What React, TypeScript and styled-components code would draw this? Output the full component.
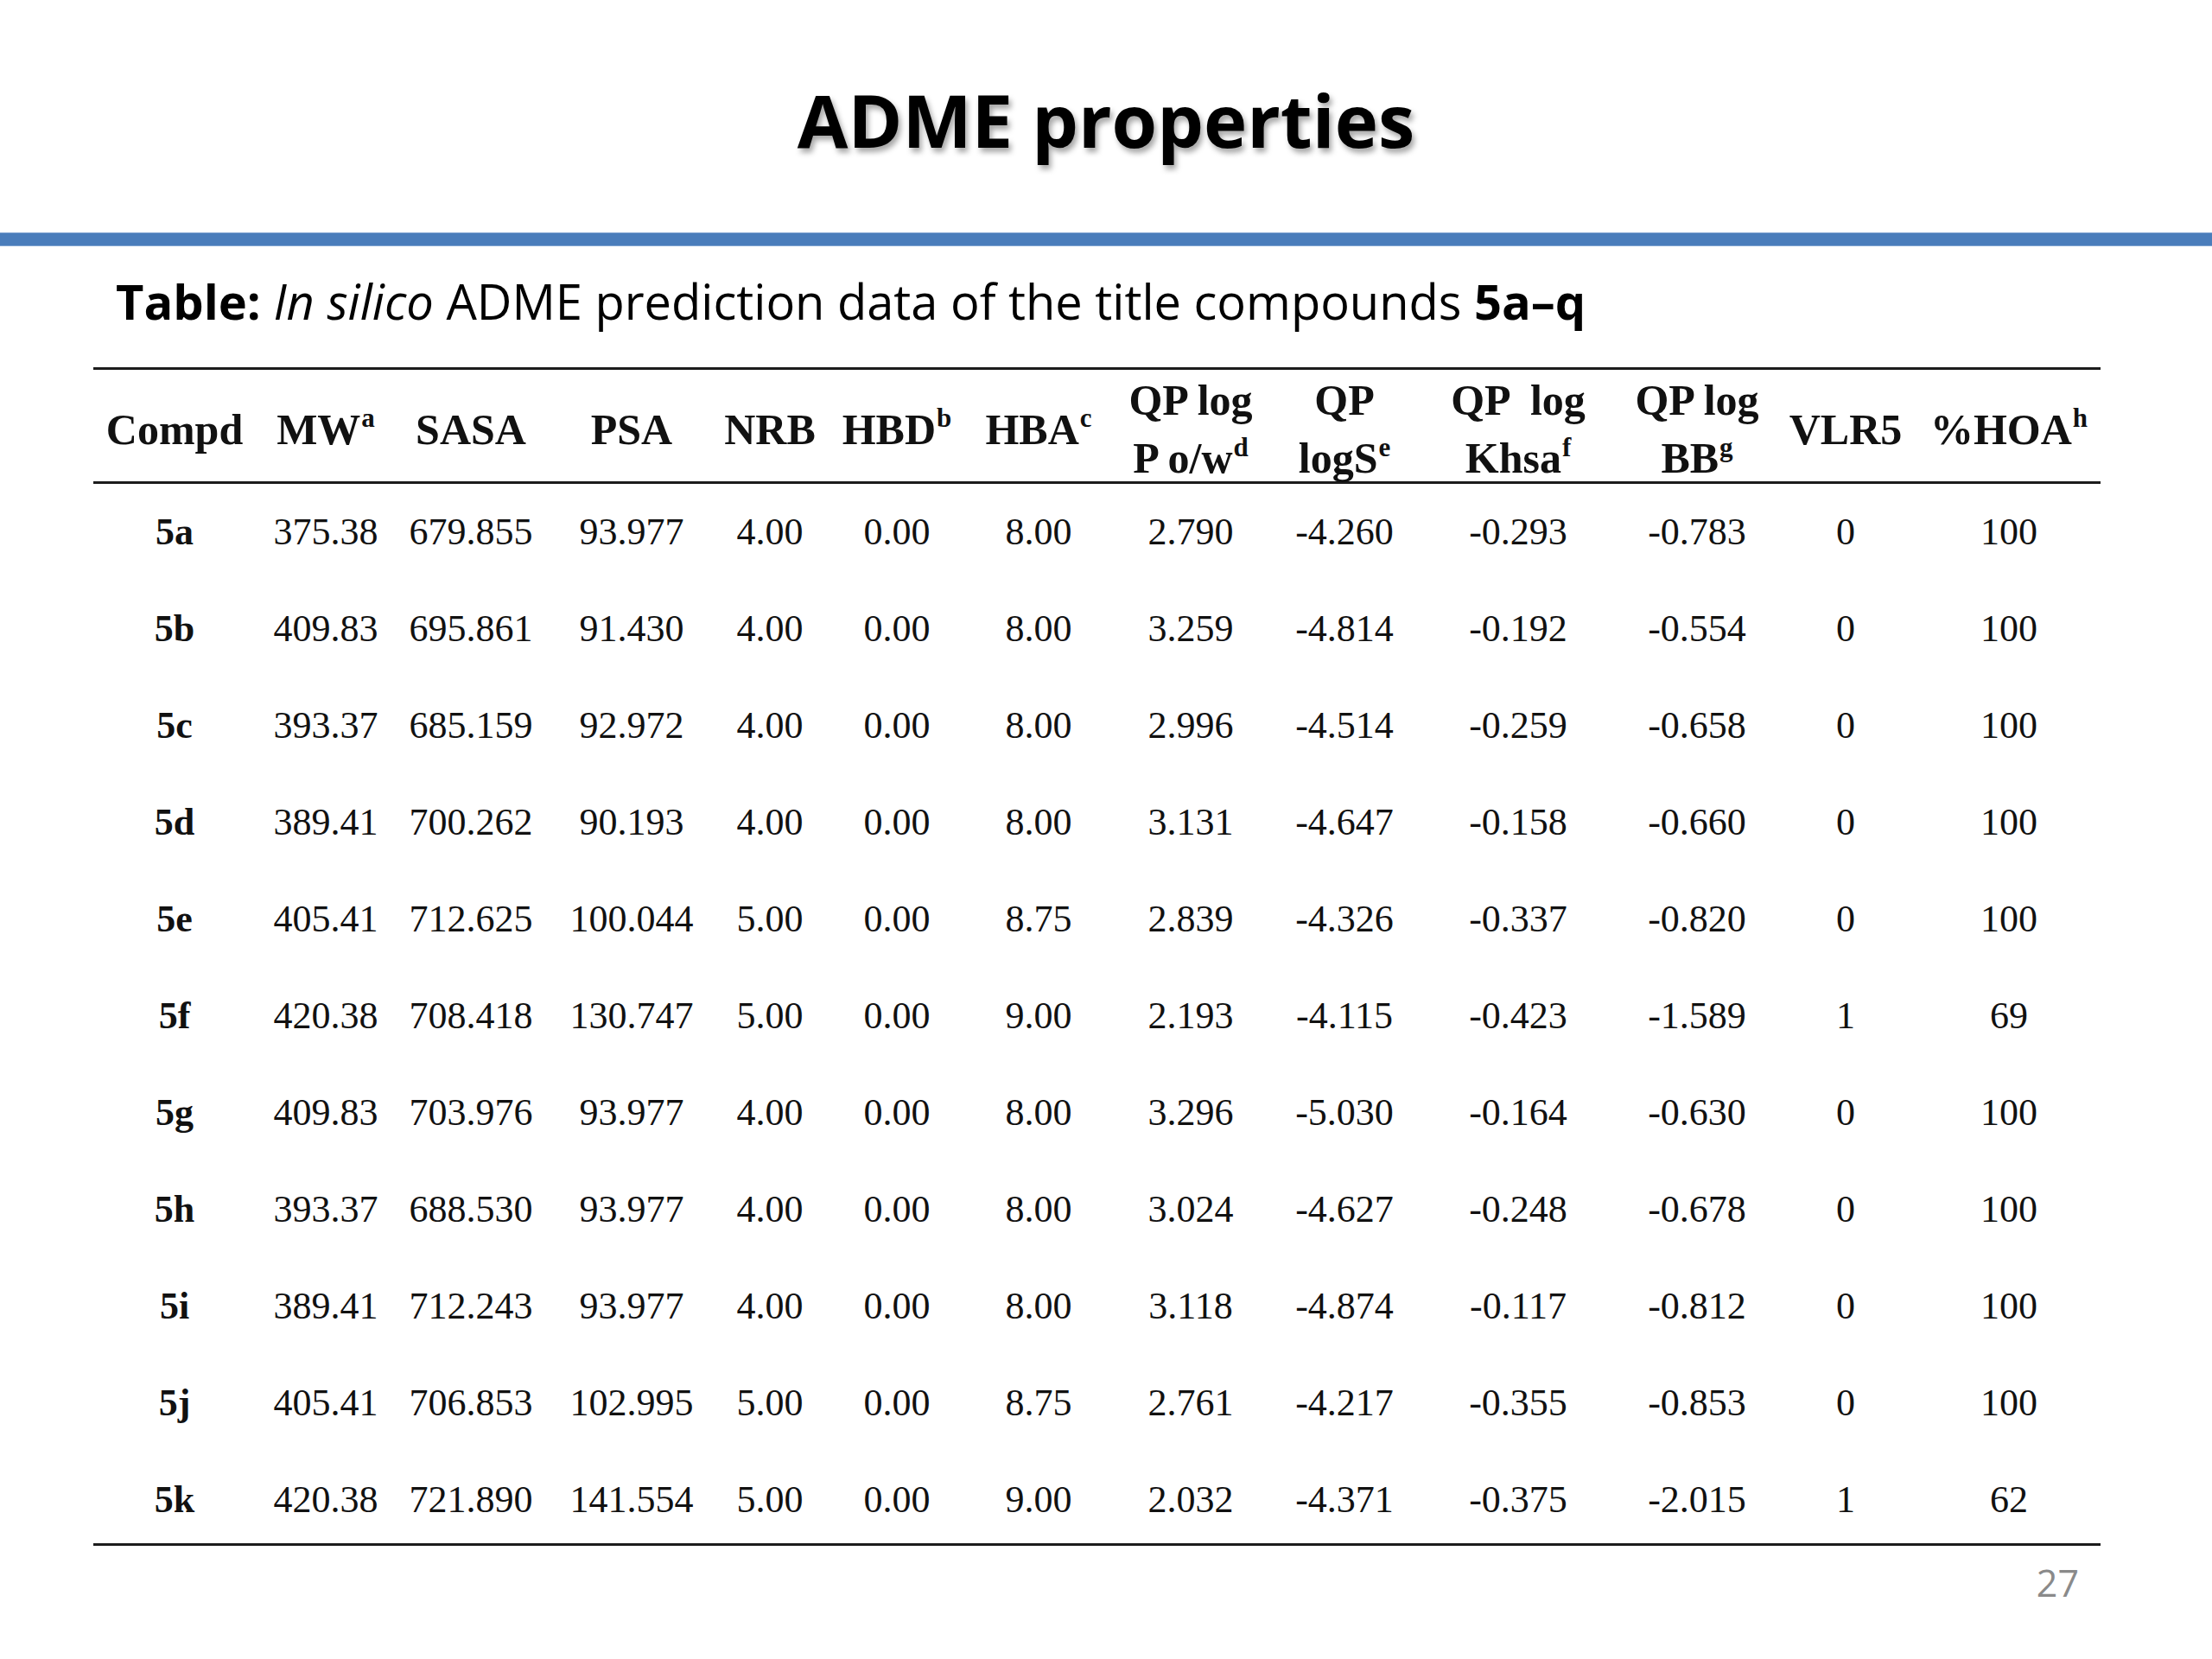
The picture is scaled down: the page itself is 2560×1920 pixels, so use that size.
import React from "react";
import styled, { createGlobalStyle } from "styled-components";

const GlobalStyle = createGlobalStyle`
  html, body {
    margin: 0;
    padding: 0;
    background: #ffffff;
  }
`;

const COLS =
  "188px 162px 174px 198px 122px 172px 156px 196px 160px 242px 172px 172px 206px";

const Slide = styled.div`
  width: 2560px;
  height: 1920px;
  display: flex;
  flex-direction: column;
  background: #ffffff;
  overflow: hidden;
`;

const Title = styled.h1`
  margin: 96px 0 0;
  font-family: "Open Sans", "Liberation Sans", sans-serif;
  font-weight: 700;
  font-size: 85px;
  line-height: 85px;
  text-align: center;
  color: #000;
  text-shadow: 3px 5px 6px rgba(0, 0, 0, 0.35);
`;

const AccentBar = styled.div`
  margin-top: 88px;
  height: 16px;
  background: #4a7dbb;
  border-top: 1px solid #7fa3d1;
  border-bottom: 1px solid #7fa3d1;
  box-sizing: border-box;
`;

const Caption = styled.p`
  margin: 35px 0 0 134px;
  font-family: "Open Sans", "Liberation Sans", sans-serif;
  font-size: 56px;
  line-height: 57px;
  color: #000;
  white-space: nowrap;

  b {
    font-weight: 700;
  }
  i {
    font-style: italic;
  }
`;

const Table = styled.div`
  margin: 48px 0 0 108px;
  width: 2323px;
  font-family: "Liberation Serif", "Times New Roman", serif;
  color: #111;
`;

const HeaderRow = styled.div`
  display: grid;
  grid-template-columns: ${COLS};
  height: 129px;
  border-top: 3px solid #1c1c1c;
  border-bottom: 3px solid #1c1c1c;
`;

const HeaderCell = styled.div`
  display: flex;
  flex-direction: column;
  align-items: center;
  justify-content: center;
  font-weight: 700;
  font-size: 50px;
  line-height: 67px;
  white-space: pre;
  padding-top: 2px;
`;

const Sup = styled.sup`
  font-size: 0.62em;
  line-height: 0;
  vertical-align: 0.62em;
  margin-left: 1px;
`;

const Body = styled.div`
  border-bottom: 3px solid #1c1c1c;
`;

const Row = styled.div`
  display: grid;
  grid-template-columns: ${COLS};
  height: 112px;
  box-sizing: border-box;
  padding-top: 31px;
  align-items: start;

  &:last-child {
    height: 106px;
  }
`;

const Cell = styled.div<{ $bold?: boolean }>`
  text-align: center;
  font-size: 44px;
  line-height: 50px;
  font-weight: ${(p) => (p.$bold ? 700 : 400)};
  white-space: nowrap;
`;

const Footer = styled.div`
  display: flex;
  justify-content: flex-end;
  width: 2406px;
  margin-top: 20px;
`;

const PageNumber = styled.span`
  font-family: "Open Sans", "Liberation Sans", sans-serif;
  font-size: 43px;
  line-height: 45px;
  color: #8a8a8a;
`;

type Head = { lines: React.ReactNode[] };

const headers: Head[] = [
  { lines: ["Compd"] },
  { lines: [<>MW<Sup>a</Sup></>] },
  { lines: ["SASA"] },
  { lines: ["PSA"] },
  { lines: ["NRB"] },
  { lines: [<>HBD<Sup>b</Sup></>] },
  { lines: [<>HBA<Sup>c</Sup></>] },
  { lines: ["QP log", <>P o/w<Sup>d</Sup></>] },
  { lines: ["QP", <>logS<Sup>e</Sup></>] },
  { lines: ["QP  log", <>Khsa<Sup>f</Sup></>] },
  { lines: ["QP log", <>BB<Sup>g</Sup></>] },
  { lines: ["VLR5"] },
  { lines: [<>%HOA<Sup>h</Sup></>] },
];

const rows: string[][] = [
  ["5a", "375.38", "679.855", "93.977", "4.00", "0.00", "8.00", "2.790", "-4.260", "-0.293", "-0.783", "0", "100"],
  ["5b", "409.83", "695.861", "91.430", "4.00", "0.00", "8.00", "3.259", "-4.814", "-0.192", "-0.554", "0", "100"],
  ["5c", "393.37", "685.159", "92.972", "4.00", "0.00", "8.00", "2.996", "-4.514", "-0.259", "-0.658", "0", "100"],
  ["5d", "389.41", "700.262", "90.193", "4.00", "0.00", "8.00", "3.131", "-4.647", "-0.158", "-0.660", "0", "100"],
  ["5e", "405.41", "712.625", "100.044", "5.00", "0.00", "8.75", "2.839", "-4.326", "-0.337", "-0.820", "0", "100"],
  ["5f", "420.38", "708.418", "130.747", "5.00", "0.00", "9.00", "2.193", "-4.115", "-0.423", "-1.589", "1", "69"],
  ["5g", "409.83", "703.976", "93.977", "4.00", "0.00", "8.00", "3.296", "-5.030", "-0.164", "-0.630", "0", "100"],
  ["5h", "393.37", "688.530", "93.977", "4.00", "0.00", "8.00", "3.024", "-4.627", "-0.248", "-0.678", "0", "100"],
  ["5i", "389.41", "712.243", "93.977", "4.00", "0.00", "8.00", "3.118", "-4.874", "-0.117", "-0.812", "0", "100"],
  ["5j", "405.41", "706.853", "102.995", "5.00", "0.00", "8.75", "2.761", "-4.217", "-0.355", "-0.853", "0", "100"],
  ["5k", "420.38", "721.890", "141.554", "5.00", "0.00", "9.00", "2.032", "-4.371", "-0.375", "-2.015", "1", "62"],
];

export default function App() {
  return (
    <>
      <GlobalStyle />
      <Slide>
        <Title>ADME properties</Title>
        <AccentBar />
        <Caption>
          <b>Table:</b> <i>In silico</i> ADME prediction data of the title compounds{" "}
          <b>5a–q</b>
        </Caption>
        <Table>
          <HeaderRow>
            {headers.map((h, i) => (
              <HeaderCell key={i}>
                {h.lines.map((l, j) => (
                  <span key={j}>{l}</span>
                ))}
              </HeaderCell>
            ))}
          </HeaderRow>
          <Body>
            {rows.map((r) => (
              <Row key={r[0]}>
                {r.map((v, i) => (
                  <Cell key={i} $bold={i === 0}>
                    {v}
                  </Cell>
                ))}
              </Row>
            ))}
          </Body>
        </Table>
        <Footer>
          <PageNumber>27</PageNumber>
        </Footer>
      </Slide>
    </>
  );
}
